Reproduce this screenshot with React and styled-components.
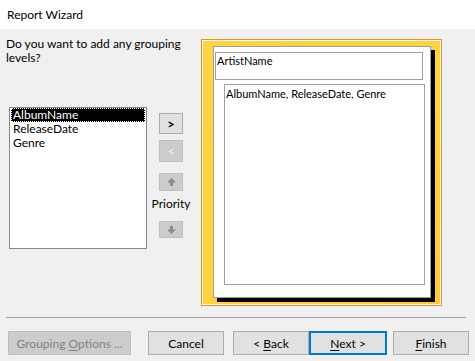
import React from "react";
import styled, { createGlobalStyle } from "styled-components";

const Global = createGlobalStyle`
  html, body { margin: 0; padding: 0; }
  body {
    width: 475px; height: 361px; overflow: hidden;
    background: #f0f0f0;
    font-family: Lato, "Liberation Sans", Arial, sans-serif;
    font-size: 12px; color: #000;
  }
  * { box-sizing: border-box; }
`;

const Window = styled.div`
  width: 475px; height: 361px;
  display: flex; flex-direction: column;
  background: #f0f0f0;
`;

const TitleBar = styled.div`
  height: 29px; background: #fff;
  display: flex; align-items: center;
  padding: 0 0 1px 7px;
  font-size: 12px;
`;

const Main = styled.div`
  display: flex; align-items: flex-start;
  height: 288px;
`;

const LeftCol = styled.div`
  width: 153px; padding: 8px 0 0 6px;
  display: flex; flex-direction: column;
`;

const Question = styled.div`
  line-height: 14px; height: 70px;
  white-space: nowrap;
`;

const ListBox = styled.div`
  margin-left: 3px; width: 138px; height: 142px;
  background: #fff; border: 1px solid #828790;
  padding: 0 1px;
  display: flex; flex-direction: column;
`;

const ListItem = styled.div`
  height: 14px; line-height: 14px; padding-left: 2px;
  white-space: nowrap;
  ${(p) => p.$selected && `
    background: #000; color: #fff;
    outline: 1px dotted #fff; outline-offset: -1px;
  `}
`;

const ButtonCol = styled.div`
  width: 36px; padding-top: 84px;
  display: flex; flex-direction: column; align-items: center;
`;

const SmallBtn = styled.div`
  flex: none;
  width: 24px; height: ${(p) => p.$h || 21}px;
  margin-top: ${(p) => p.$mt || 0}px;
  display: flex; align-items: center; justify-content: center;
  background: ${(p) => (p.$disabled ? "#cccccc" : "#e1e1e1")};
  border: 1px solid ${(p) => (p.$disabled ? "#bfbfbf" : "#adadad")};
  color: ${(p) => (p.$disabled ? "#f4f4f4" : "#000")};
  font-size: 13px; font-weight: 700;
  ${(p) => p.$disabled && `text-shadow: 0 0 1px #a0a0a0;`}
`;

const PriorityLabel = styled.div`
  flex: none;
  margin-top: 6px; line-height: 14px; height: 24px;
  white-space: nowrap;
`;

const Frame = styled.div`
  margin: 10px 0 0 12px;
  width: 241px; height: 267px;
  border: 1px solid #f58d1e;
  box-shadow: inset 0 0 0 1px #fff;
  background: linear-gradient(135deg, #ffd43e 0%, #ffd23a 80%, #ffc83a 100%);
  padding: 6px 0 0 11px;
`;

const Page = styled.div`
  width: 218px; height: 252px;
  background: #fff;
  border: 1px solid #a0a0a0;
  box-shadow: 4px 4px 0 #000;
  padding: 5px 0 0 1px;
  display: flex; flex-direction: column;
  font-size: 11px;
`;

const HeaderBox = styled.div`
  width: 208px; height: 28px;
  border: 1px solid #a0a0a0;
  padding: 1px 0 0 1px;
  line-height: 14px;
`;

const DetailBox = styled.div`
  margin: 4px 0 0 9px;
  width: 201px; height: 201px;
  border: 1px solid #a0a0a0;
  padding: 2px 0 0 1px;
  line-height: 14px;
  white-space: nowrap;
`;

const Separator = styled.div`
  margin: 0 9px 0 6px; height: 1px; background: #a0a0a0;
`;

const Footer = styled.div`
  display: flex; padding: 13px 0 0 8px;
`;

const Button = styled.div`
  width: ${(p) => p.$w || 76}px; height: 24px;
  margin-left: ${(p) => p.$ml || 0}px;
  display: flex; align-items: center; justify-content: center;
  background: ${(p) => (p.$disabled ? "#cccccc" : "#e1e1e1")};
  border: ${(p) => (p.$default ? "2px solid #0078d7" : `1px solid ${p.$disabled ? "#bfbfbf" : "#adadad"}`)};
  color: ${(p) => (p.$disabled ? "#838383" : "#000")};
  white-space: pre;
  u { text-decoration: underline; text-underline-offset: 2px; }
`;

const Arrow = ({ down }) => (
  <svg width="9" height="8" viewBox="0 0 9 8" style={down ? { transform: "rotate(180deg)" } : undefined}>
    <polygon points="4.5,0 9,4.5 0,4.5" fill="#8c8c8c" />
    <rect x="3" y="4" width="3" height="4" fill="#8c8c8c" />
  </svg>
);

export default function App() {
  return (
    <Window>
      <Global />
      <TitleBar>Report Wizard</TitleBar>
      <Main>
        <LeftCol>
          <Question>Do you want to add any grouping<br />levels?</Question>
          <ListBox>
            <ListItem $selected>AlbumName</ListItem>
            <ListItem>ReleaseDate</ListItem>
            <ListItem>Genre</ListItem>
          </ListBox>
        </LeftCol>
        <ButtonCol>
          <SmallBtn>&gt;</SmallBtn>
          <SmallBtn $disabled $mt={6} $h={22}>&lt;</SmallBtn>
          <SmallBtn $disabled $mt={11} $h={18}><Arrow /></SmallBtn>
          <PriorityLabel>Priority</PriorityLabel>
          <SmallBtn $disabled $h={17}><Arrow down /></SmallBtn>
        </ButtonCol>
        <Frame>
          <Page>
            <HeaderBox>ArtistName</HeaderBox>
            <DetailBox>AlbumName, ReleaseDate, Genre</DetailBox>
          </Page>
        </Frame>
      </Main>
      <Separator />
      <Footer>
        <Button $w={123} $disabled>Grouping <u>O</u>ptions ...</Button>
        <Button $ml={17}>Cancel</Button>
        <Button $ml={9}>&lt; <u>B</u>ack</Button>
        <Button $default $w={78}><u>N</u>ext &gt;</Button>
        <Button $ml={6}><u>F</u>inish</Button>
      </Footer>
    </Window>
  );
}
